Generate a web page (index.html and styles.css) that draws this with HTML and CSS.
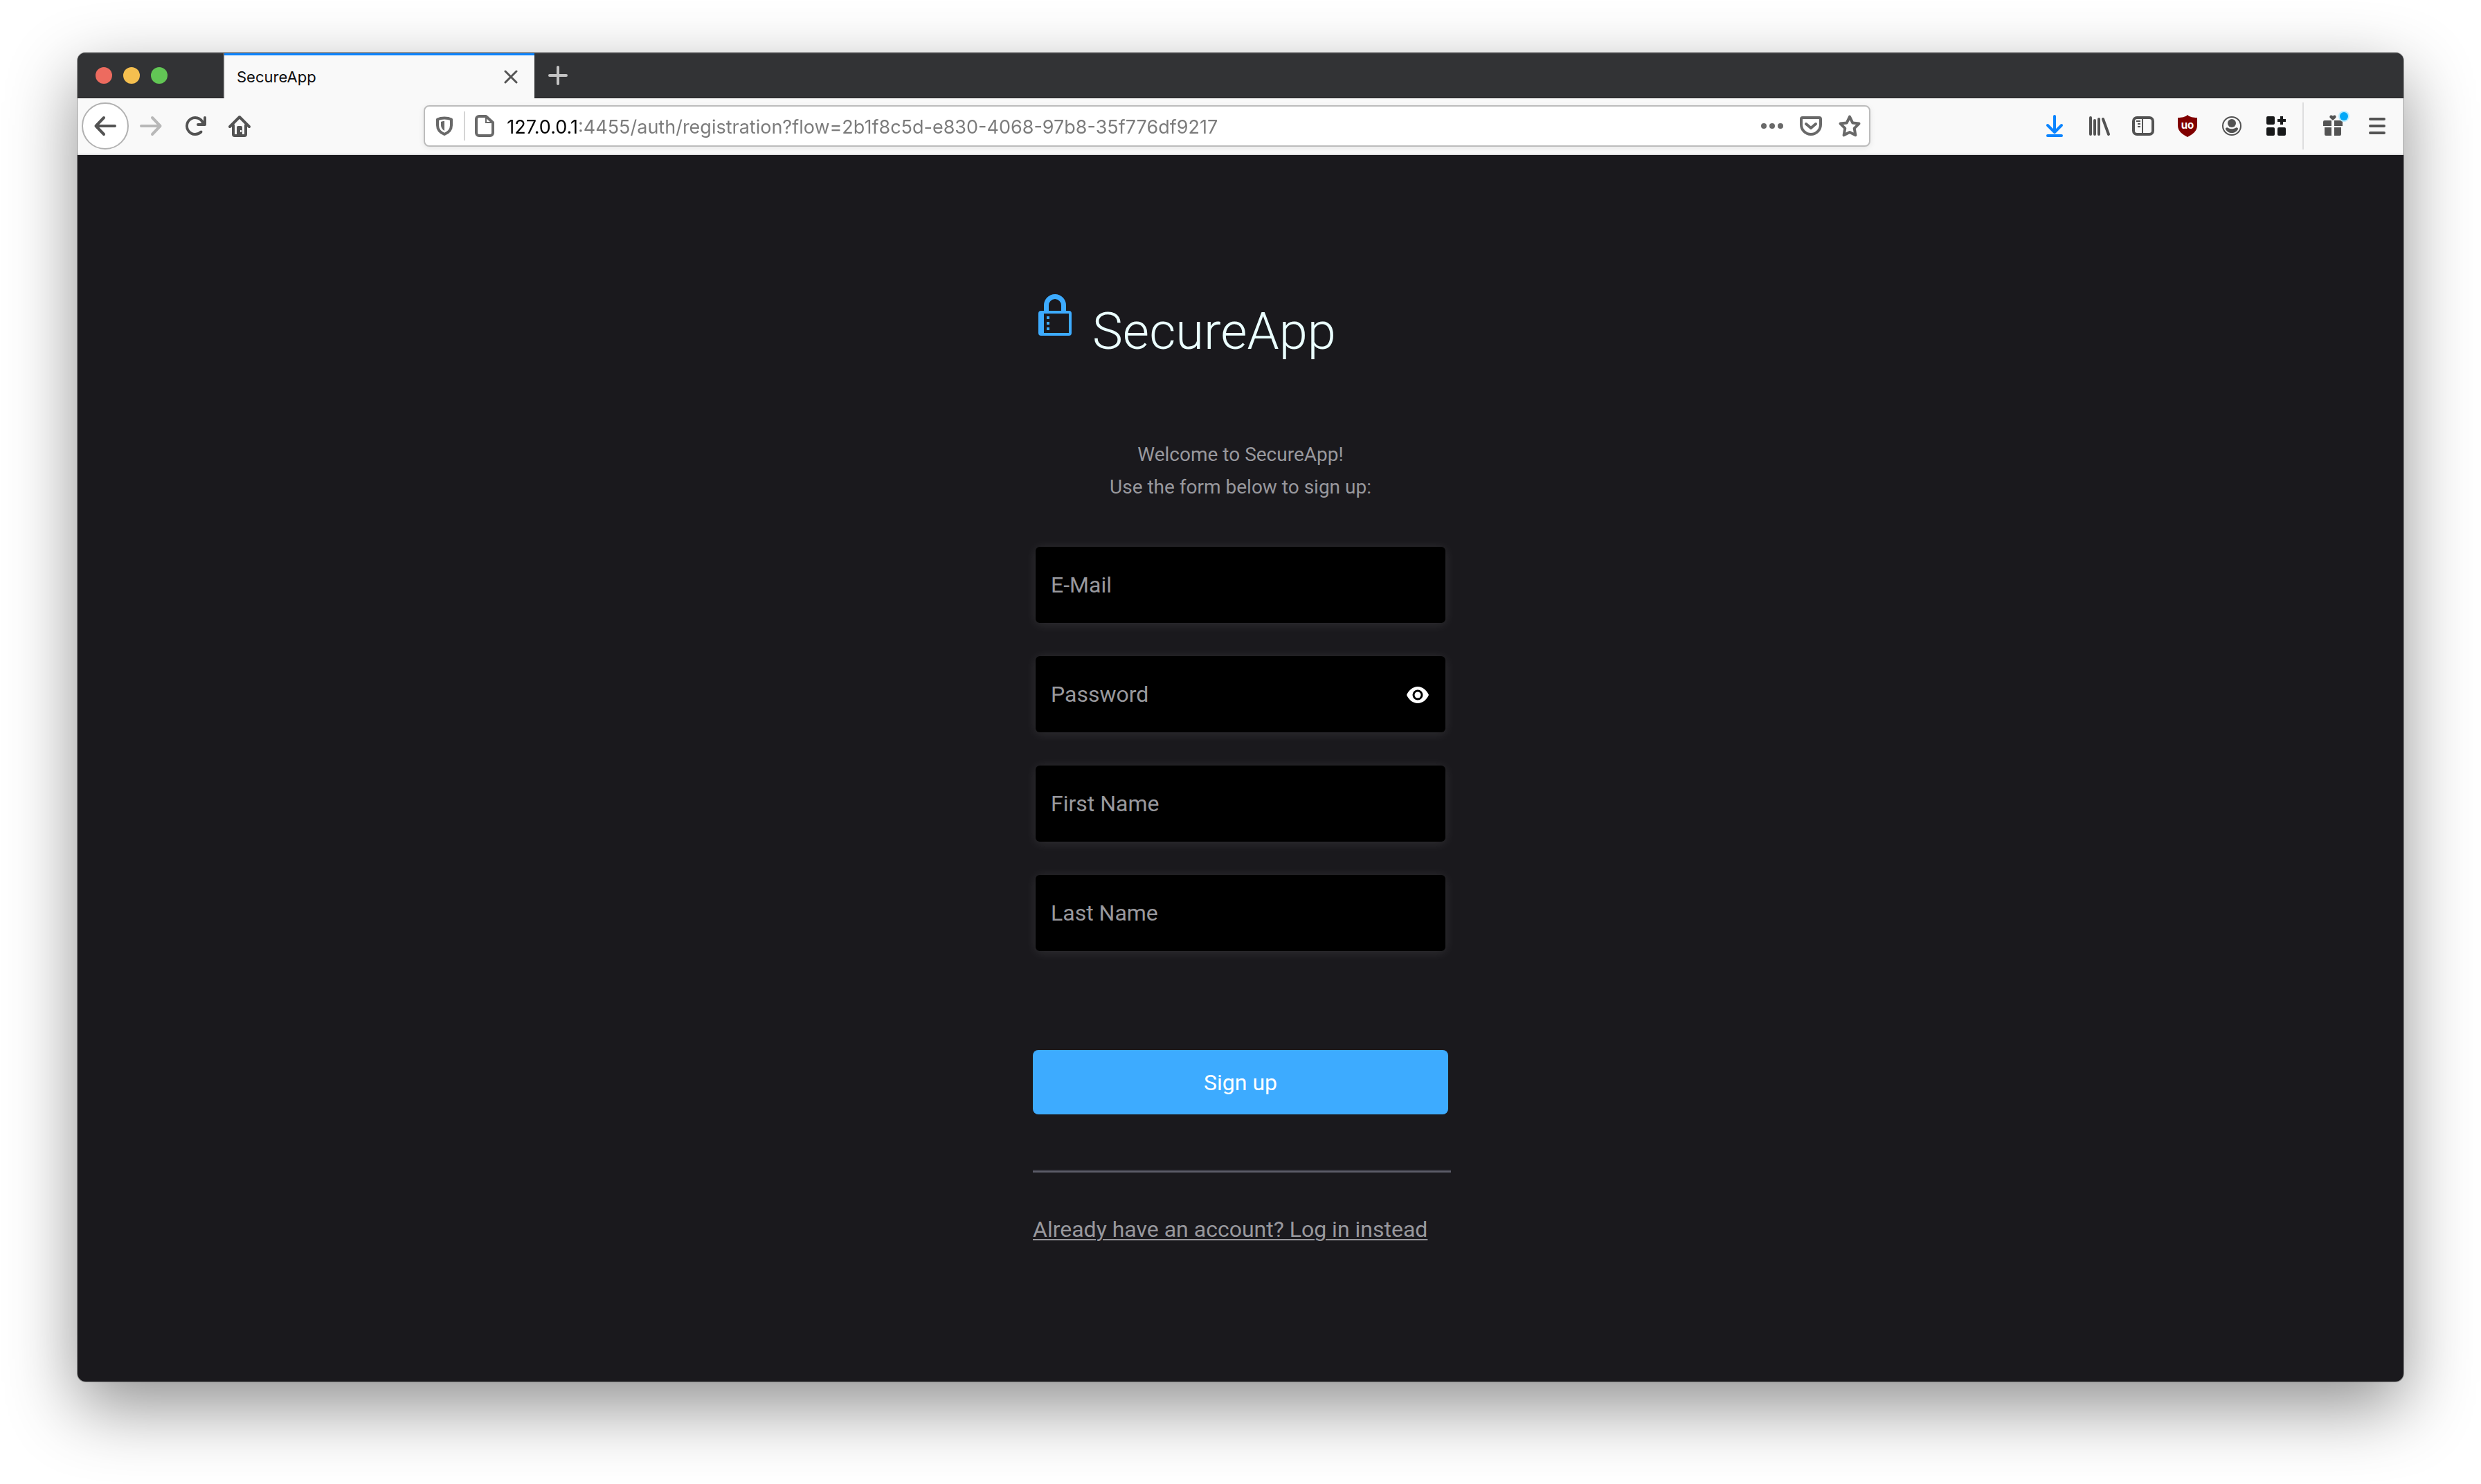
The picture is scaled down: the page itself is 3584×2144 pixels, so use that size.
FILE: index.html
```html
<!DOCTYPE html>
<html lang="en">
<head>
<meta charset="utf-8">
<meta name="viewport" content="width=device-width, initial-scale=1">
<title>SecureApp</title>
<link rel="stylesheet" href="styles.css">
</head>
<body>
<div class="window">
  <header class="tabbar">
    <div class="lights">
      <button class="light light-close" type="button" aria-label="Close window"></button>
      <button class="light light-min" type="button" aria-label="Minimise window"></button>
      <button class="light light-max" type="button" aria-label="Zoom window"></button>
    </div>
    <div class="tab">
      <span class="tab-title">SecureApp</span>
      <button class="tab-close" type="button" aria-label="Close tab">
        <svg width="20" height="20" viewBox="0 0 20 20" fill="none" stroke="#555" stroke-width="3" stroke-linecap="round"><path d="M2 2l16 16M18 2L2 18"/></svg>
      </button>
    </div>
    <button class="tab-new" type="button" aria-label="New tab">
      <svg width="28" height="28" viewBox="0 0 28 28" fill="none" stroke="#c4c4c4" stroke-width="4" stroke-linecap="round"><path d="M14 2v24M2 14h24"/></svg>
    </button>
  </header>

  <nav class="toolbar" aria-label="Browser toolbar">
    <button class="back" type="button" aria-label="Back">
      <svg class="icon" viewBox="0 0 32 32"><path class="line" d="M30 16H3M14 4L2.500 16L14 28"/></svg>
    </button>
    <button class="tool tool-off" type="button" aria-label="Forward">
      <svg class="icon" viewBox="0 0 32 32"><path class="line" d="M2 16h27M18 4l11.500 12L18 28"/></svg>
    </button>
    <button class="tool" type="button" aria-label="Reload">
      <svg class="icon" viewBox="0 0 16 16"><path d="M15 1a1 1 0 0 0-1 1v2.418A6.995 6.995 0 1 0 8 15a6.954 6.954 0 0 0 4.950-2.050 1 1 0 0 0-1.414-1.414A5.019 5.019 0 1 1 12.549 6H10a1 1 0 0 0 0 2h5a1 1 0 0 0 1-1V2a1 1 0 0 0-1-1z"/></svg>
    </button>
    <button class="tool" type="button" aria-label="Home">
      <svg class="icon" viewBox="0 0 32 32"><path class="line" d="M2 17L16 3l14 14M7 15v13a2 2 0 0 0 2 2h14a2 2 0 0 0 2-2V15"/><path fill-rule="evenodd" d="M12 30V18a2 2 0 0 1 2-2h4a2 2 0 0 1 2 2v12zM17 22v3h2v-3z"/></svg>
    </button>

    <div class="urlbar">
      <button class="url-btn" type="button" aria-label="Tracking protection">
        <svg class="icon" viewBox="0 0 32 32"><path class="line" d="M16 4.500c4 0 7 .5 10 2V15c0 6-4 10.500-10 13C10 25.500 6 21 6 15V6.500c3-1.500 6-2 10-2z"/><path d="M16 9v14c-3-2-5-4.500-5-8v-5c1.500-.6 3-.9 5-1z"/></svg>
      </button>
      <span class="url-sep"></span>
      <button class="url-btn" type="button" aria-label="Site information">
        <svg class="icon" viewBox="0 0 32 32"><path class="line" d="M8 2h10l10 9v15a4 4 0 0 1-4 4H8a4 4 0 0 1-4-4V6a4 4 0 0 1 4-4z"/><path class="thin" d="M18 3v8h9"/></svg>
      </button>
      <input class="url-text" type="text" aria-label="Address" value="127.0.0.1:4455/auth/registration?flow=2b1f8c5d-e830-4068-97b8-35f776df9217">
      <button class="url-btn" type="button" aria-label="Page actions">
        <svg class="icon" viewBox="0 0 32 32"><circle cx="4" cy="16" r="4"/><circle cx="16" cy="16" r="4"/><circle cx="28" cy="16" r="4"/></svg>
      </button>
      <button class="url-btn" type="button" aria-label="Save to Pocket">
        <svg class="icon" viewBox="0 0 32 32"><path class="line" d="M4 4h24a2 2 0 0 1 2 2v8a14 14 0 0 1-28 0V6a2 2 0 0 1 2-2zM9 13l7 6 7-6"/></svg>
      </button>
      <button class="url-btn" type="button" aria-label="Bookmark this page">
        <svg class="icon" viewBox="0 0 32 32"><path class="line" d="M16 2.500l4.200 8.900 9.300 1.200-6.800 6.700 1.700 10L16 24.900l-8.400 4.400 1.700-10-6.800-6.700 9.300-1.200z"/></svg>
      </button>
    </div>

    <button class="tool tool-blue" type="button" aria-label="Downloads">
      <svg class="icon" viewBox="0 0 32 32"><path class="line" d="M16 2v22M6 15l10 10 10-10M6 30h20"/></svg>
    </button>
    <button class="tool" type="button" aria-label="Library">
      <svg class="icon" viewBox="0 0 32 32"><path class="line" d="M4 4v24M10 8v20M16 6v22M22 6l8 22"/></svg>
    </button>
    <button class="tool" type="button" aria-label="Sidebars">
      <svg class="icon" viewBox="0 0 32 32"><rect class="line" x="2" y="4" width="28" height="24" rx="5"/><path class="thin" d="M15 5v22M6 9h6M8 13h4M8 17h4"/></svg>
    </button>
    <button class="tool" type="button" aria-label="uBlock Origin">
      <svg class="icon" viewBox="0 0 32 32"><path fill="#800000" d="M16 0c3 3 8 4 14 4v11c0 9-7 13-14 17C9 28 2 24 2 15V4c6 0 11-1 14-4z"/><text class="ublock" x="16" y="20" text-anchor="middle">uo</text></svg>
    </button>
    <button class="tool" type="button" aria-label="Account">
      <svg class="icon" viewBox="0 0 32 32"><circle class="thin" cx="16" cy="16" r="13"/><circle cx="16" cy="12" r="6"/><path d="M10 18.500c3.600 2.400 8.400 2.400 12 0 1.500-.8 3.500.5 3 2C23.500 24 20 26 16 26s-7.500-2-9-5.500c-.5-1.500 1.500-2.800 3-2z"/></svg>
    </button>
    <button class="tool tool-black" type="button" aria-label="Extensions">
      <svg class="icon" viewBox="0 0 32 32"><rect x="2" y="2" width="12" height="12" rx="2"/><rect x="2" y="18" width="12" height="12" rx="2"/><rect x="18" y="18" width="12" height="12" rx="2"/><path d="M22 2h4v4h4v4h-4v4h-4v-4h-4V6h4z"/></svg>
    </button>
    <span class="tool-sep"></span>
    <button class="tool" type="button" aria-label="What's new">
      <svg class="icon" viewBox="0 0 32 32"><path d="M4 8h10v8H2v-6a2 2 0 0 1 2-2zM18 8h10a2 2 0 0 1 2 2v6H18zM4 18h10v12H6a2 2 0 0 1-2-2zM18 18h10v10a2 2 0 0 1-2 2h-8zM16 8l-4-3.500C10 2 13-1 16 1.500 19-1 22 2 20 4.500z"/><circle cx="32" cy="2" r="8" fill="#b8ecff"/><circle cx="32" cy="2" r="6" fill="#00a8f8"/></svg>
    </button>
    <button class="tool" type="button" aria-label="Menu">
      <svg class="icon" viewBox="0 0 32 32"><path class="line" d="M6 6h20M6 16h20M6 26h20"/></svg>
    </button>
  </nav>

  <main class="page">
    <div class="column">
      <div class="brand">
        <svg class="lock" width="48" height="60" viewBox="0 0 48 60" fill="#3dabff"><path fill-rule="evenodd" d="M8 24v-8a16 16 0 0 1 32 0v8h4a4 4 0 0 1 4 4v28a4 4 0 0 1-4 4H4a4 4 0 0 1-4-4V28a4 4 0 0 1 4-4zM15 24h18v-8a9 9 0 0 0-18 0zM8 28v28h36V28z"/><path d="M12 32h4v4h-4zM12 40h4v4h-4zM12 48h4v4h-4z"/></svg>
        <h1 class="brand-name">SecureApp</h1>
      </div>
      <p class="intro">Welcome to SecureApp!<br>Use the form below to sign up:</p>
      <form class="form">
        <div class="field"><input class="input" type="email" placeholder="E-Mail" aria-label="E-Mail"></div>
        <div class="field">
          <input class="input" type="password" placeholder="Password" aria-label="Password">
          <button class="reveal" type="button" aria-label="Show password">
            <svg width="32" height="24" viewBox="0 0 32 24"><path fill="#fff" fill-rule="evenodd" d="M16 0C9 0 3 5 0 12c3 7 9 12 16 12s13-5 16-12C29 5 23 0 16 0zM16 4.500a7.500 7.500 0 1 1 0 15 7.500 7.500 0 0 1 0-15z"/><circle cx="16" cy="12" r="4.500" fill="#fff"/></svg>
          </button>
        </div>
        <div class="field"><input class="input" type="text" placeholder="First Name" aria-label="First Name"></div>
        <div class="field"><input class="input" type="text" placeholder="Last Name" aria-label="Last Name"></div>
        <button class="submit" type="submit">Sign up</button>
      </form>
      <hr class="rule">
      <a class="login" href="#login">Already have an account? Log in instead</a>
    </div>
  </main>
</div>
</body>
</html>
```
FILE: styles.css
```css
* { box-sizing: border-box; }

body {
  margin: 0;
  min-height: 100vh;
  padding: 76px 112px 148px;
  display: flex;
  background: #fff;
  font-family: Roboto, "Liberation Sans", sans-serif;
}

button {
  border: 0;
  padding: 0;
  background: none;
  font: inherit;
  color: inherit;
}

svg { display: block; flex: none; }

/* Browser window */
.window {
  flex: 1;
  min-width: 0;
  display: flex;
  flex-direction: column;
  border-radius: 12px;
  overflow: hidden;
  background: #1a191d;
  box-shadow: 0 0 0 1px rgba(0, 0, 0, 0.3), 0 36px 100px rgba(0, 0, 0, 0.44);
}

.tabbar {
  display: flex;
  height: 66px;
  background: #323335;
  border-top: 1px solid #77787a;
}

.lights {
  display: flex;
  align-items: center;
  gap: 16px;
  width: 212px;
  padding-left: 26px;
  border-right: 2px solid #5a5a5c;
  border-bottom: 1px solid #222;
}

.light { width: 24px; height: 24px; border-radius: 50%; }
.light-close { background: #ed6b5f; }
.light-min { background: #f5bf4f; }
.light-max { background: #62c655; }

.tab {
  display: flex;
  align-items: center;
  justify-content: space-between;
  width: 448px;
  padding: 0 24px 0 18px;
  background: #f9f9f9;
  border-top: 3px solid #0a84ff;
  font-family: Inter, sans-serif;
  font-size: 22px;
  color: #0c0c0d;
}

.tab-new {
  flex: 1;
  display: flex;
  align-items: center;
  padding-left: 20px;
  border-bottom: 1px solid #222;
}

.toolbar {
  display: flex;
  align-items: center;
  height: 82px;
  padding: 0 6px;
  background: #f9f9f9;
  border-bottom: 2px solid #e0e0e1;
  color: #535353;
}

.icon { width: 32px; height: 32px; fill: currentColor; overflow: visible; }
.line { fill: none; stroke: currentColor; stroke-width: 4; stroke-linecap: round; stroke-linejoin: round; }
.thin { fill: none; stroke: currentColor; stroke-width: 2; }
.ublock { font: 700 15px Inter, sans-serif; fill: #fff; }

.back,
.tool,
.url-btn {
  display: flex;
  flex: none;
  align-items: center;
  justify-content: center;
}

.back {
  width: 68px;
  height: 68px;
  border: 2px solid #b1b1b1;
  border-radius: 50%;
  background: #fff;
}

.tool { width: 64px; height: 64px; }
.tool-off { color: #b8b8b8; }
.tool-blue { color: #0a84ff; }
.tool-black { color: #18191a; }
.tool-sep { width: 2px; height: 68px; margin: 0 10px 0 6px; background: #dededf; }

.urlbar {
  flex: 1;
  display: flex;
  align-items: center;
  height: 60px;
  margin: 0 7%;
  border: 2px solid #bcbcbc;
  border-radius: 8px;
  background: #fff;
  box-shadow: 0 2px 8px rgba(0, 0, 0, 0.08);
  color: #696969;
}

.url-btn { width: 56px; height: 56px; }
.url-sep { width: 2px; height: 42px; background: #d4d4d4; }

/* The host is dark, the rest of the address is grey */
.url-text {
  flex: 1;
  min-width: 0;
  height: 56px;
  padding: 2px 0 0 4px;
  border: 0;
  outline: 0;
  font-family: Inter, sans-serif;
  font-size: 27px;
  color: transparent;
  background: linear-gradient(to right, #000 108px, #7b7b7b 108px);
  -webkit-background-clip: text;
  background-clip: text;
}

/* Registration page */
.page {
  flex: 1;
  display: flex;
  justify-content: center;
  padding: 201px 24px 96px;
  color: #98989d;
}

.column { width: 600px; }

.brand { display: flex; align-items: flex-start; gap: 30px; padding-left: 8px; }

.brand-name {
  margin: 0;
  font-size: 74px;
  line-height: 108px;
  font-weight: 300;
  color: #ebffff;
}

.intro { margin: 100px 0 63px; font-size: 28px; line-height: 47px; text-align: center; }

.form { display: flex; flex-direction: column; gap: 48px; }
.field { position: relative; padding: 0 4px; }

.input {
  display: block;
  width: 100%;
  height: 110px;
  padding: 0 22px;
  border: 0;
  border-radius: 6px;
  background: #000;
  box-shadow: 0 2px 16px rgba(255, 255, 255, 0.1);
  font: inherit;
  font-size: 32px;
  color: #fff;
}

.input::placeholder { color: #98989d; opacity: 1; }

.reveal { position: absolute; top: 2px; bottom: 0; right: 28px; }

.submit {
  height: 93px;
  margin-top: 95px;
  border-radius: 8px;
  background: #3dabff;
  font-size: 32px;
  color: #fff;
}

.rule {
  height: 4px;
  margin: 80px -4px 58px 0;
  border: 0;
  border-top: 2px solid #3e3e48;
  background: #5c5c68;
}

.login {
  font-size: 32px;
  line-height: 48px;
  color: #98989d;
  text-decoration-thickness: 2px;
  text-underline-offset: 3px;
}
```
